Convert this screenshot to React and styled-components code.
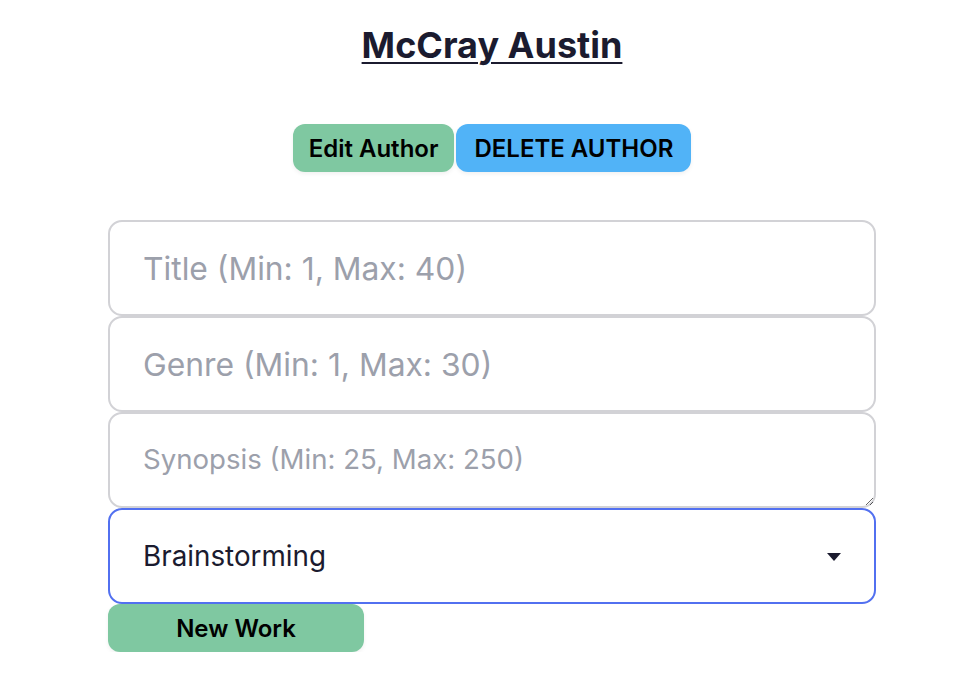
import React from 'react';
import styled, { createGlobalStyle } from 'styled-components';

const GlobalStyle = createGlobalStyle`
  body {
    margin: 0;
    background: #ffffff;
    font-family: Inter, "Noto Sans", sans-serif;
    color: #1b1b2f;
  }
`;

const Page = styled.div`
  display: flex;
  flex-direction: column;
  align-items: center;
  padding: 22px 0 0 20px;
`;

const AuthorName = styled.h1`
  margin: 0;
  font-size: 36px;
  font-weight: 700;
  line-height: 46px;
  text-decoration: underline;
  text-underline-offset: 4px;
  text-decoration-thickness: 2px;
  color: #1b1b2f;
`;

const Actions = styled.div`
  display: flex;
  gap: 2px;
  margin-top: 56px;
`;

const Button = styled.button`
  height: 48px;
  padding: 0 ${(p) => (p.$tone === 'blue' ? '18px' : '16px')};
  border: none;
  border-radius: 12px;
  background: ${(p) => (p.$tone === 'blue' ? '#51b3f7' : '#7fc8a1')};
  color: #000;
  font-family: Inter, "Noto Sans", sans-serif;
  font-size: 24px;
  font-weight: 600;
  box-shadow: 0 2px 4px rgba(0, 0, 0, 0.06);
  cursor: pointer;
`;

const Form = styled.form`
  display: flex;
  flex-direction: column;
  width: 768px;
  margin-top: 48px;
`;

const fieldBase = `
  box-sizing: border-box;
  width: 100%;
  height: 96px;
  border: 2px solid #d2d2d6;
  border-radius: 14px;
  background: #fff;
  font-family: Inter, "Noto Sans", sans-serif;
  color: #1b1b2f;
  outline: none;
  &::placeholder { color: #9ca0ab; }
`;

const Input = styled.input`
  ${fieldBase}
  padding: 0 33px;
  font-size: 31.8px;
`;

const TextArea = styled.textarea`
  ${fieldBase}
  padding: 28px 33px 0;
  font-size: 27.6px;
  resize: vertical;
  display: block;
`;

const SelectWrap = styled.div`
  position: relative;
`;

const Select = styled.select`
  ${fieldBase}
  appearance: none;
  padding: 0 33px;
  font-size: 27.8px;
  border-color: #5270f0;
`;

const Caret = styled.svg`
  position: absolute;
  right: 35px;
  top: 45px;
  pointer-events: none;
`;

const SubmitButton = styled(Button)`
  width: 256px;
`;

export default function App() {
  return (
    <>
      <GlobalStyle />
      <Page>
        <AuthorName>McCray Austin</AuthorName>
        <Actions>
          <Button>Edit Author</Button>
          <Button $tone="blue">DELETE AUTHOR</Button>
        </Actions>
        <Form onSubmit={(e) => e.preventDefault()}>
          <Input placeholder="Title (Min: 1, Max: 40)" />
          <Input placeholder="Genre (Min: 1, Max: 30)" />
          <TextArea placeholder="Synopsis (Min: 25, Max: 250)" />
          <SelectWrap>
            <Select defaultValue="Brainstorming">
              <option>Brainstorming</option>
              <option>Drafting</option>
              <option>Editing</option>
              <option>Published</option>
            </Select>
            <Caret width="14" height="8" viewBox="0 0 14 8">
              <path d="M0 0h14L7 8z" fill="#1b1b2f" />
            </Caret>
          </SelectWrap>
          <SubmitButton type="submit">New Work</SubmitButton>
        </Form>
      </Page>
    </>
  );
}
